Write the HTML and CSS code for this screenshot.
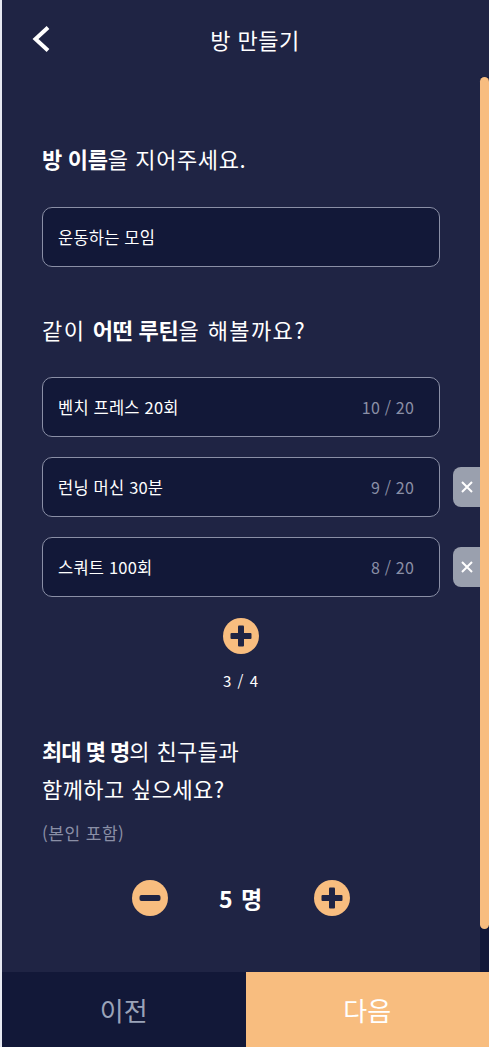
FILE: index.html
```html
<!DOCTYPE html>
<html lang="ko">
<head>
    <meta charset="UTF-8">
    <meta name="viewport" content="width=device-width, initial-scale=1.0">
    <title>방 만들기</title>
    <link rel="stylesheet" href="styles.css">
</head>
<body>
    <div class="app">
        <div class="header">
            <button class="back" aria-label="뒤로">
                <svg width="22" height="28" viewBox="0 0 22 28">
                    <path d="M18 2.5 L5.5 14 L18 25.5" fill="none" stroke="#fff" stroke-width="4"/>
                </svg>
            </button>
            <div class="title">방 만들기</div>
        </div>

        <div class="main">
            <div class="content">
                <h2 class="question q-name"><b>방 이름</b>을 지어주세요.</h2>
                <div class="field">운동하는 모임</div>

                <h2 class="question q-routine">같이 <b>어떤 루틴</b>을 해볼까요?</h2>
                <div class="routines">
                    <div class="routine-row">
                        <div class="field"><span>벤치 프레스 20회</span><span class="count">10 / 20</span></div>
                    </div>
                    <div class="routine-row">
                        <div class="field"><span>런닝 머신 30분</span><span class="count">9 / 20</span></div>
                        <button class="delete" aria-label="삭제">
                            <svg width="14" height="14" viewBox="0 0 14 14"><path d="M2 2 L12 12 M12 2 L2 12" stroke="#fff" stroke-width="2"/></svg>
                        </button>
                    </div>
                    <div class="routine-row">
                        <div class="field"><span>스쿼트 100회</span><span class="count">8 / 20</span></div>
                        <button class="delete" aria-label="삭제">
                            <svg width="14" height="14" viewBox="0 0 14 14"><path d="M2 2 L12 12 M12 2 L2 12" stroke="#fff" stroke-width="2"/></svg>
                        </button>
                    </div>
                </div>

                <div class="add-routine">
                    <button class="round-btn" aria-label="루틴 추가">
                        <svg width="36" height="36" viewBox="0 0 36 36"><circle cx="18" cy="18" r="18" fill="#f8bd7f"/><rect x="7.5" y="15" width="21" height="6" rx="1" fill="#1f2444"/><rect x="15" y="7.5" width="6" height="21" rx="1" fill="#1f2444"/></svg>
                    </button>
                    <div class="add-count">3 / 4</div>
                </div>

                <h2 class="question q-people"><b>최대 몇 명</b>의 친구들과<br>함께하고 싶으세요?</h2>
                <p class="hint">(본인 포함)</p>

                <div class="stepper">
                    <button class="round-btn" aria-label="줄이기">
                        <svg width="36" height="36" viewBox="0 0 36 36"><circle cx="18" cy="18" r="18" fill="#f8bd7f"/><rect x="7.5" y="15" width="21" height="6" rx="2" fill="#1f2444"/></svg>
                    </button>
                    <div class="people">5 명</div>
                    <button class="round-btn" aria-label="늘리기">
                        <svg width="36" height="36" viewBox="0 0 36 36"><circle cx="18" cy="18" r="18" fill="#f8bd7f"/><rect x="7.5" y="15" width="21" height="6" rx="1" fill="#1f2444"/><rect x="15" y="7.5" width="6" height="21" rx="1" fill="#1f2444"/></svg>
                    </button>
                </div>
            </div>
            <div class="scrollbar">
                <div class="thumb"></div>
            </div>
        </div>

        <div class="footer">
            <button class="prev">이전</button>
            <button class="next">다음</button>
        </div>
    </div>
</body>
</html>
```

FILE: styles.css
```css
body {
    margin: 0;
    background-color: #e6e9f2;
    font-family: "Noto Sans CJK KR", "Noto Sans", sans-serif;
    color: #fff;
}

button {
    font-family: inherit;
    border: none;
    background: none;
    padding: 0;
    cursor: pointer;
}

.app {
    margin-left: 2px;
    height: 1047px;
    display: flex;
    flex-direction: column;
    background-color: #1f2444;
}

.header {
    height: 77px;
    flex-shrink: 0;
    display: flex;
    align-items: center;
    padding-left: 28px;
}

.back {
    width: 22px;
    height: 28px;
    display: flex;
}

.title {
    flex: 1;
    margin-right: 31px;
    text-align: center;
    font-size: 22px;
    line-height: 28px;
    letter-spacing: 0.5px;
}

.main {
    flex: 1;
    display: flex;
    overflow: hidden;
}

.content {
    flex: 1;
    padding: 0 40px;
    overflow: hidden;
}

.scrollbar {
    width: 9px;
    background-color: #121838;
}

.thumb {
    height: 852px;
    background-color: #f8bd7f;
    border-radius: 5px;
}

.question {
    margin: 0;
    font-size: 22px;
    font-weight: 400;
    line-height: 30px;
    letter-spacing: 0.6px;
}

.question b {
    font-weight: 700;
    letter-spacing: -0.3px;
}

.q-name {
    margin-top: 66px;
    margin-bottom: 34px;
}

.q-routine {
    margin-top: 47px;
    margin-bottom: 33px;
    letter-spacing: 1.4px;
}

.q-people {
    margin-top: 40px;
    line-height: 38px;
    letter-spacing: 0.4px;
}

.q-people b {
    letter-spacing: -1px;
}

.field {
    height: 60px;
    box-sizing: border-box;
    border: 1px solid #8a8fa6;
    border-radius: 10px;
    background-color: #121838;
    padding: 0 25px 0 15px;
    display: flex;
    align-items: center;
    justify-content: space-between;
    font-size: 16.5px;
    letter-spacing: 0.2px;
}

.count {
    color: #8a8fa6;
    font-size: 16px;
}

.routines {
    display: flex;
    flex-direction: column;
    gap: 20px;
}

.routine-row {
    display: flex;
    align-items: center;
    gap: 13px;
}

.routine-row .field {
    flex: 0 0 100%;
}

.delete {
    flex-shrink: 0;
    width: 40px;
    height: 40px;
    border-radius: 8px;
    background-color: #9aa0ae;
    display: flex;
    align-items: center;
    padding-left: 7px;
    box-sizing: border-box;
}

.add-routine {
    margin-top: 21px;
    display: flex;
    flex-direction: column;
    align-items: center;
}

.round-btn {
    width: 36px;
    height: 36px;
    display: flex;
}

.add-count {
    margin-top: 17px;
    font-size: 15px;
    line-height: 20px;
    letter-spacing: 1px;
}

.hint {
    margin: 14px 0 0;
    font-size: 17px;
    line-height: 24px;
    letter-spacing: 0.5px;
    color: #8a8fa6;
}

.stepper {
    margin-top: 35px;
    display: flex;
    justify-content: center;
    align-items: center;
}

.people {
    width: 146px;
    text-align: center;
    font-size: 23px;
    font-weight: 700;
    letter-spacing: 1px;
}

.footer {
    height: 75px;
    flex-shrink: 0;
    display: flex;
}

.footer button {
    flex: 1;
    font-size: 26px;
}

.prev {
    background-color: #121838;
    color: #9aa3b8;
}

.next {
    background-color: #f8bd7f;
    color: #fff;
}
```
